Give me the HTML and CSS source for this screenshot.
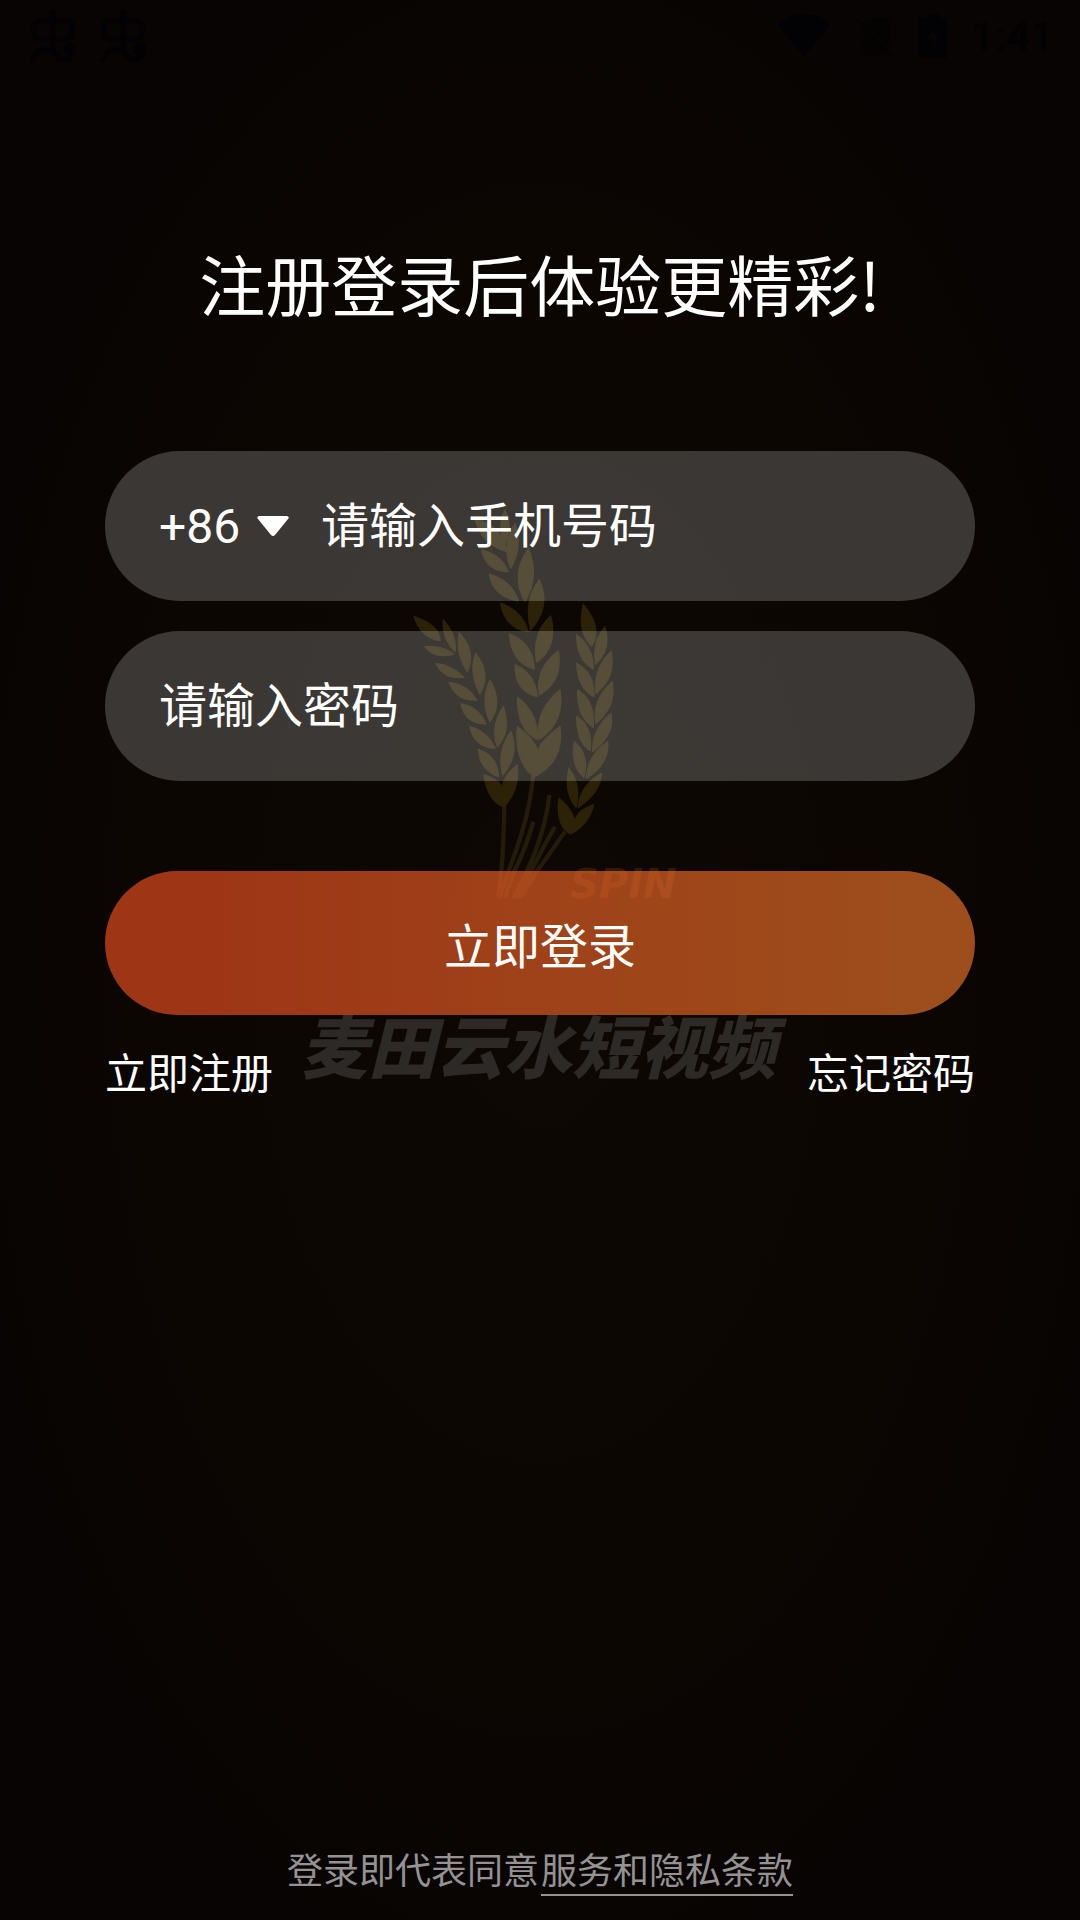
FILE: index.html
```html
<!DOCTYPE html>
<html lang="zh-CN">
<head>
    <meta charset="UTF-8">
    <meta name="viewport" content="width=device-width, initial-scale=1.0">
    <title>麦田云水短视频 - 登录</title>
    <link rel="stylesheet" href="styles.css">
</head>
<body>
    <div class="page">
        <div class="backdrop" aria-hidden="true">
            <svg class="logo" viewBox="300 500 480 600" width="480" height="600">
                <g transform="translate(380 520) scale(.3333)">
                    <path class="stems" d="M373 850Q372 960 364 1055L355 1130M460 762C450 870 425 950 385 1055L358 1135M508 825C500 900 480 970 440 1055L400 1135M460 905Q440 980 400 1060L375 1135M525 920Q490 980 455 1050L410 1135M555 935Q510 1000 470 1055L420 1135"/>
                    <!-- 中间的麦穗 -->
                    <path class="grain" d="M285-5Q300 70 380 95Q370 20 285-5ZM375-30Q400 20 375 75Q350 15 375-30ZM405 10Q430 80 392 145Q365 80 405 10ZM305 90Q320 155 385 155Q365 105 305 90Z
                        M328 163Q340 230 415 243Q395 180 328 163ZM445 85Q480 170 435 245Q390 165 445 85ZM362 250Q375 325 445 335Q425 270 362 250ZM478 180Q515 260 452 330Q430 240 478 180Z
                        M388 342Q395 430 463 447Q460 370 388 342ZM512 288Q535 380 470 427Q455 340 512 288ZM405 435Q405 515 472 530Q465 460 405 435ZM535 393Q550 485 478 525Q465 445 535 393Z
                        M413 532Q410 630 472 658Q475 580 413 532ZM540 510Q555 610 477 658Q465 570 540 510ZM412 620C405 690 425 745 463 770C515 745 550 700 540 620Q490 655 474 690Q455 650 412 620Z"/>
                    <!-- 左边的麦穗 -->
                    <path class="grain" d="M102 290Q125 355 180 362Q180 315 102 290ZM135 380Q160 418 222 402Q185 375 135 380ZM168 430Q190 480 252 472Q215 435 168 430ZM207 487Q230 545 290 540Q265 495 207 487ZM243 552Q255 612 318 612Q295 560 243 552ZM270 620Q280 680 345 685Q325 635 270 620ZM295 688Q300 750 355 770Q355 710 295 688Z
                        M190 300Q232 345 225 395Q185 355 190 300ZM238 338Q290 395 262 455Q225 400 238 338ZM287 400Q335 460 300 522Q265 460 287 400ZM330 480Q370 550 330 605Q300 540 330 480ZM370 560Q395 635 352 680Q330 620 370 560ZM393 635Q420 705 368 765Q350 690 393 635Z
                        M312 765C318 815 340 850 370 860C400 835 418 790 412 735Q380 755 366 800Q350 775 312 765Z"/>
                    <!-- 右边的麦穗 -->
                    <path class="grain" d="M610 253Q670 325 635 378Q590 335 610 253ZM590 345Q590 420 640 447Q640 380 590 345ZM590 430Q595 510 642 530Q645 460 590 430ZM593 510Q590 590 640 622Q645 540 593 510ZM590 590Q590 665 630 692Q640 620 590 590ZM583 665Q570 735 612 772Q630 705 583 665ZM567 745Q550 815 588 862Q605 795 567 745Z
                        M675 320Q695 390 647 432Q635 365 675 320ZM693 395Q710 470 648 520Q640 445 693 395ZM697 485Q710 560 648 610Q635 540 697 485ZM693 580Q705 645 638 695Q635 630 693 580ZM683 665Q690 730 620 775Q620 710 683 665ZM665 760Q660 820 595 862Q600 795 665 760Z
                        M537 835C528 890 545 930 572 942C605 925 635 890 640 855Q600 865 584 900Q570 860 537 835Z"/>
                </g>
                <text class="spin" x="570" y="898">SPIN</text>
                <text class="name" x="300" y="1073">麦田云水短视频</text>
            </svg>
        </div>

        <header class="status">
            <div class="status-group">
                <svg class="notice" viewBox="0 0 46 52" width="46" height="52">
                    <rect x="4" y="11" width="38" height="18" rx="4"/>
                    <path d="M23 2V40M3 50C9 34 20 38 27 46C36 56 48 42 41 38"/>
                    <circle cx="40" cy="39" r="4"/>
                </svg>
                <svg class="notice" viewBox="0 0 46 52" width="46" height="52">
                    <rect x="4" y="11" width="38" height="18" rx="4"/>
                    <path d="M23 2V40M3 50C9 34 20 38 27 46C36 56 48 42 41 38"/>
                    <circle cx="40" cy="39" r="4"/>
                </svg>
            </div>
            <div class="status-group">
                <svg viewBox="0 0 54 44" width="54" height="44"><path d="M0 10Q27-10 54 10L27 43Z"/></svg>
                <svg class="sim" viewBox="0 0 40 44" width="40" height="44"><path d="M12 4H36V35L7 8ZM5 11L34 41H5Z"/><path d="M1 5L38 43" class="slash"/></svg>
                <svg viewBox="0 0 28 44" width="28" height="44"><path fill-rule="evenodd" d="M0 4H7V0H21V4H28V44H0ZM17 11L8 25H14L11 36L20 21H14Z"/></svg>
                <span class="clock">1:41</span>
            </div>
        </header>

        <form class="login">
            <h1>注册登录后体验更精彩!</h1>
            <div class="field">
                <select class="code" aria-label="国家代码">
                    <option>+86</option>
                </select>
                <svg class="arrow" viewBox="0 0 32 20" width="32" height="20"><path d="M2 0H30Q33 1 31 3L18 19Q16 21 14 19L1 3Q-1 1 2 0Z"/></svg>
                <input type="tel" aria-label="手机号码" placeholder="请输入手机号码">
            </div>
            <div class="field">
                <input type="password" aria-label="密码" placeholder="请输入密码">
            </div>
            <button class="submit" type="button">立即登录</button>
            <nav class="links">
                <a href="#">立即注册</a>
                <a href="#">忘记密码</a>
            </nav>
        </form>

        <footer class="terms">
            <span>登录即代表同意</span>
            <a href="#">服务和隐私条款</a>
        </footer>
    </div>
</body>
</html>
```

FILE: styles.css
```
*{box-sizing:border-box}
body{margin:0;background:#080403;color:#fff;font-family:Roboto,"Noto Sans CJK SC",sans-serif}
a{color:inherit;text-decoration:none}
.page{position:relative;isolation:isolate;display:flex;flex-direction:column;min-height:100vh;background:radial-gradient(ellipse at 50% 50%,#0d0803 0%,#0b0602 50%,#080403 80%)}

.backdrop{position:absolute;z-index:-1;top:500px;left:0;right:0;display:flex;justify-content:center}
.logo{overflow:visible}
.grain{fill:#2c2208;stroke:#2c2208;stroke-width:4;stroke-linejoin:round}
.stems{fill:none;stroke:#241b0a;stroke-width:13}
.name{font-family:"Noto Sans CJK SC",sans-serif;font-size:68px;font-weight:900;font-style:italic;fill:#2d2926}
.spin{font-family:"DejaVu Sans",sans-serif;font-size:40px;font-weight:700;font-style:oblique;fill:#2e1b08}

.status{display:flex;justify-content:space-between;align-items:center;height:72px;padding:0 26px 0 30px;color:#020103;fill:#020103}
.status-group{display:flex;align-items:center;gap:24px}
.notice{fill:none;stroke:#020103;stroke-width:5;stroke-linecap:round}
.sim{fill:#050202}
.slash{stroke:#050202;stroke-width:3}
.clock{font-size:42px;font-weight:500}

.login{display:flex;flex-direction:column;padding:0 105px}
h1{margin:166px 0 125px;font-family:"Noto Sans CJK SC",sans-serif;font-size:66px;font-weight:400;line-height:88px;text-align:center}
.field{display:flex;align-items:center;height:150px;margin-bottom:30px;padding:0 54px;border-radius:75px;background:rgba(255,255,255,.2)}
.field input,.code{padding:0;border:0;outline:0;background:none;color:#fff;font:inherit;font-size:48px}
.field input{flex:1;min-width:0;height:100%}
.field input::placeholder{color:#fff;opacity:1}
.code{appearance:none}
.arrow{margin:0 32px 0 16px;fill:#fff;pointer-events:none}
.submit{height:144px;margin:60px 0 30px;border:0;border-radius:72px;background:linear-gradient(90deg,rgba(244,81,33,.63) 10%,rgba(244,118,43,.63) 90%);color:#fff;font:inherit;font-size:48px;cursor:pointer}
.links{display:flex;justify-content:space-between;font-size:42px;line-height:60px}

.terms{display:flex;justify-content:center;gap:2px;margin-top:auto;padding-bottom:24px;color:#949292;font-size:36px;line-height:44px}
.terms a{border-bottom:2px solid #949292}
```
